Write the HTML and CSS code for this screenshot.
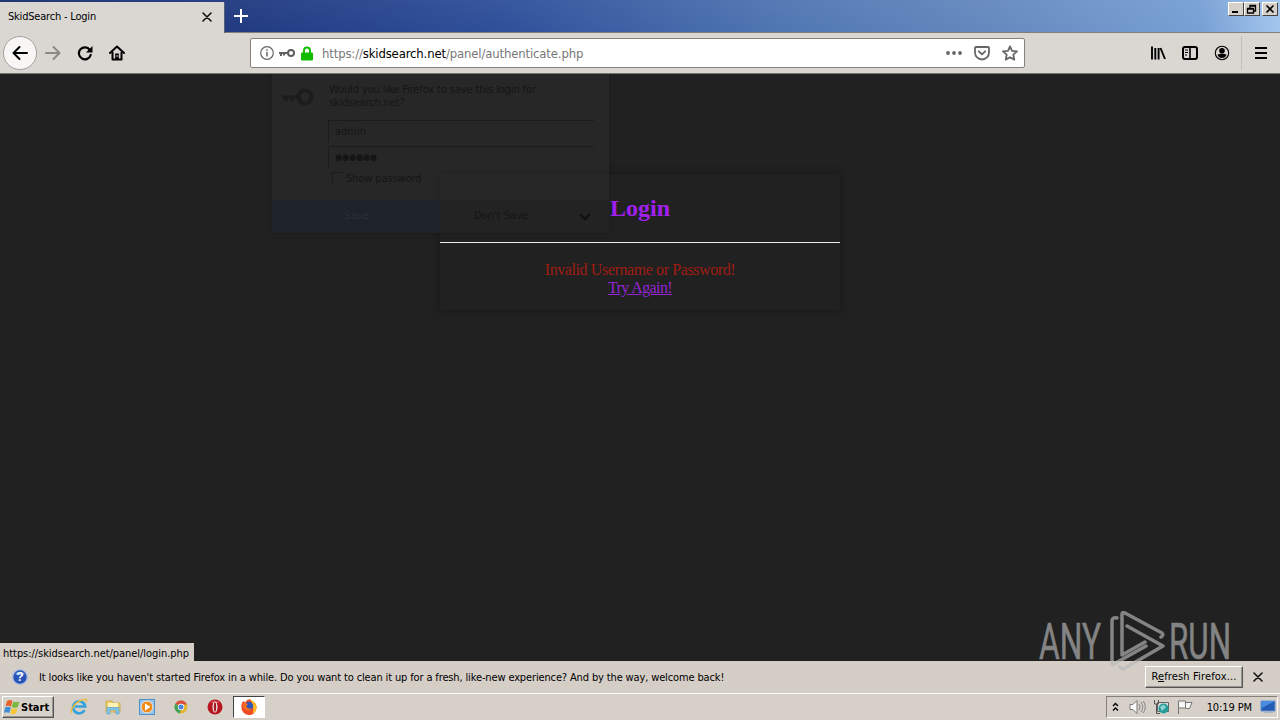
FILE: index.html
```html
<!DOCTYPE html>
<html lang="en">
<head>
<meta charset="utf-8">
<title>SkidSearch - Login</title>
<link rel="stylesheet" href="styles.css">
</head>
<body>
<div class="screen">
  <header class="tabs">
    <div class="tab"><span class="tab-title">SkidSearch - Login</span>
      <svg class="tab-close" width="10" height="10" viewBox="0 0 10 10"><path d="M1 1l8 8M9 1l-8 8" stroke="#111" stroke-width="1.600" stroke-linecap="round"/></svg>
    </div>
    <svg class="new-tab" width="14" height="14" viewBox="0 0 14 14"><path d="M7 0v14M0 7h14" stroke="#fff" stroke-width="2"/></svg>
    <div class="win-buttons">
      <span class="win"><svg width="14" height="13" viewBox="0 0 14 13"><path d="M3 9h6" stroke="#000" stroke-width="2"/></svg></span>
      <span class="win"><svg width="14" height="13" viewBox="0 0 14 13"><path d="M5 5V2.500h5.500V8H9M5 3h5.500M2.500 5.500h6v4.500h-6zM2.500 6h6" fill="none" stroke="#000" stroke-width="1.300"/></svg></span>
      <span class="win win-close"><svg width="14" height="13" viewBox="0 0 14 13"><path d="M3.500 2.500l7 7M10.500 2.500l-7 7" stroke="#000" stroke-width="1.600"/></svg></span>
    </div>
  </header>

  <nav class="toolbar">
    <div class="nav-left">
      <span class="back"><svg width="16" height="16" viewBox="0 0 16 16"><path d="M15 8H2M7.500 2L1.500 8l6 6" fill="none" stroke="#000" stroke-width="2" stroke-linecap="round" stroke-linejoin="round"/></svg></span>
      <svg width="16" height="16" viewBox="0 0 16 16"><path d="M1 8h13M8.500 2l6 6-6 6" fill="none" stroke="#8b8985" stroke-width="2" stroke-linecap="round" stroke-linejoin="round"/></svg>
      <svg width="16" height="16" viewBox="0 0 16 16"><path d="M12.800 4.800A6 6 0 1 0 13.700 10" fill="none" stroke="#000" stroke-width="2.200" stroke-linecap="round"/><path d="M15.500 1v6.500H9z"/></svg>
      <svg width="16" height="16" viewBox="0 0 16 16"><path d="M1 8l7-6.500L15 8" fill="none" stroke="#000" stroke-width="2" stroke-linecap="round" stroke-linejoin="round"/><path d="M3.500 7v7.500h9V7" fill="none" stroke="#000" stroke-width="2" stroke-linejoin="round"/><path d="M6.200 8.500h3.600V15H6.200z"/><path d="M7.600 10h1v2h-1z" fill="#ddd"/></svg>
    </div>
    <div class="urlbar">
      <svg width="14" height="14" viewBox="0 0 14 14"><circle cx="7" cy="7" r="6.300" fill="none" stroke="#666" stroke-width="1.200"/><path d="M7 6v4.500M7 3.300v1.500" stroke="#666" stroke-width="1.500"/></svg>
      <svg class="key" width="16" height="10" viewBox="0 0 16 10"><circle cx="12" cy="5" r="3" fill="none" stroke="#606060" stroke-width="2"/><path d="M9 5H0M2 5v3M5 5v2.500" fill="none" stroke="#606060" stroke-width="2"/></svg>
      <svg class="lock" width="12" height="15" viewBox="0 0 12 15"><path d="M3 8V4.500a3 3 0 0 1 6 0V8" fill="none" stroke="#12bc00" stroke-width="2"/><rect y="6.500" width="12" height="8" rx="1" fill="#12bc00"/></svg>
      <span class="url">https://<b>skidsearch.net</b>/panel/authenticate.php</span>
      <div class="url-actions">
        <svg width="16" height="16" viewBox="0 0 16 16" fill="#666"><circle cx="2" cy="8" r="1.900"/><circle cx="8" cy="8" r="1.900"/><circle cx="14" cy="8" r="1.900"/></svg>
        <svg width="16" height="16" viewBox="0 0 16 16" fill="none" stroke="#666" stroke-width="1.800" stroke-linecap="round" stroke-linejoin="round"><path d="M2 2h12q1 0 1 1v4.500a7 7 0 0 1-14 0V3q0-1 1-1z"/><path d="M4.800 6.300L8 9.300l3.200-3"/></svg>
        <svg width="16" height="16" viewBox="0 0 16 16"><path d="M8 1.300l2 4.500 5 .6-3.700 3.300 1 4.900L8 12.200l-4.300 2.400 1-4.900L1 6.400l5-.6z" fill="none" stroke="#666" stroke-width="1.800" stroke-linejoin="round"/></svg>
      </div>
    </div>
    <div class="nav-right">
      <svg width="16" height="16" viewBox="0 0 16 16"><path d="M2 1.500v13M5.300 3v11.500M8.600 3v11.500M10.500 3l4.500 11" stroke="#000" stroke-width="1.900"/></svg>
      <svg width="16" height="16" viewBox="0 0 16 16"><rect x="1" y="2" width="14" height="12" rx="2" fill="none" stroke="#000" stroke-width="2"/><path d="M8 2v12" stroke="#000" stroke-width="1.600"/><path d="M3 5h3M3 7.500h3M3 10h2" stroke="#000"/></svg>
      <svg width="16" height="16" viewBox="0 0 16 16"><circle cx="8" cy="8" r="6.700" fill="none" stroke="#000" stroke-width="1.100"/><circle cx="8" cy="5.800" r="2.800"/><path d="M3.500 9.500q4.500-1.500 9 0-1 3.500-4.500 3.500T3.500 9.500z"/></svg>
      <span class="menu"><svg width="12" height="12" viewBox="0 0 12 12"><path d="M0 1h12M0 6h12M0 11h12" stroke="#000" stroke-width="2"/></svg></span>
    </div>
  </nav>

  <main class="page">
    <section class="login">
      <h2>Login</h2>
      <div class="message"><span>Invalid Username or Password!</span><a href="#">Try Again!</a></div>
    </section>
    <section class="save-popup">
      <div class="save-body">
        <svg class="save-key" width="34" height="20" viewBox="0 0 34 20"><circle cx="24" cy="10" r="6.500" fill="none" stroke="#1c1c1c" stroke-width="4"/><path d="M18 10H1M5 10v4M11 10v4" stroke="#1c1c1c" stroke-width="3"/></svg>
        <div class="save-form">
          <p>Would you like Firefox to save this login for skidsearch.net?</p>
          <div class="field">admin</div>
          <div class="field dots">●●●●●●</div>
          <label><i class="box"></i>Show password</label>
        </div>
      </div>
      <div class="save-actions"><span class="save">Save</span><span class="dont">Don't Save</span>
        <span class="drop"><svg width="12" height="8" viewBox="0 0 12 8"><path d="M1 1l5 5 5-5" fill="none" stroke="#101010" stroke-width="2"/></svg></span></div>
    </section>
    <div class="status">https://skidsearch.net/panel/login.php</div>
  </main>

  <aside class="notice">
    <svg width="16" height="16" viewBox="0 0 16 16"><circle cx="8" cy="8" r="7.300" fill="#2855b5" stroke="#a9bcdf" stroke-width="1.300"/><path d="M3 5a6 5 0 0 1 10 0q-5 3-10 0z" fill="#6e98dd"/><text x="8" y="12.300" class="question">?</text></svg>
    <span class="notice-text">It looks like you haven't started Firefox in a while. Do you want to clean it up for a fresh, like-new experience? And by the way, welcome back!</span>
    <button class="refresh">R<u>e</u>fresh Firefox...</button>
    <svg class="notice-close" width="10" height="10" viewBox="0 0 10 10"><path d="M1 1l8 8M9 1L1 9" stroke="#111" stroke-width="1.600" stroke-linecap="round"/></svg>
  </aside>

  <footer class="taskbar">
    <button class="start"><svg width="16" height="16" viewBox="0 0 16 16"><path d="M3 2q3-2 5.500 0L7 7.500Q4.500 6 1.500 7.300z" fill="#e8622c"/><path d="M9.300 2.500q2.500 1.500 6 0L13.800 8q-3 1.500-6 0z" fill="#78b83c"/><path d="M1.300 8.300q3-1.300 5.500.2L5.300 14Q3 12.500 0 13.700z" fill="#3d8fd8"/><path d="M7.600 9q3 1.500 6 .2L12 14.500q-3 1.500-5.800 0z" fill="#f4c63a"/></svg><span>Start</span></button>
    <div class="launch">
      <svg width="18" height="18" viewBox="0 0 18 18"><path d="M14.500 12a6 6 0 1 1 .6-3.500H5" fill="none" stroke="#35a2dc" stroke-width="2.700"/><path d="M2 15C-1 13 5 4 12 2q6-2 4 2" fill="none" stroke="#edbc38" stroke-width="1.400"/></svg>
      <svg width="18" height="18" viewBox="0 0 18 18"><path d="M2 3h6l1 2h7v9H2z" fill="#edcd68" stroke="#d0ad50"/><path d="M4 5h10v4H4z" fill="#fff2b6"/><path d="M3 16V9.500h12V16h-3v-4H6v4z" fill="#84c4e8" stroke="#5da5d0" stroke-width=".7"/></svg>
      <svg width="18" height="18" viewBox="0 0 18 18"><rect x="1.500" y="1.500" width="15" height="15" fill="#9ac5e8" stroke="#4b91ce"/><circle cx="9" cy="9" r="5.900" fill="#f28b19" stroke="#e9e5dc"/><path d="M7 5.500l5.500 3.500L7 12.500z" fill="#fff"/></svg>
      <svg width="18" height="18" viewBox="0 0 18 18"><circle cx="9" cy="9" r="6.500" fill="#e5b52f"/><path d="M9 9L3.300 5.800A6.500 6.500 0 0 1 15 6.500H9z" fill="#d94f42"/><path d="M9 9L3.300 5.800A6.500 6.500 0 0 0 8 15.400z" fill="#41a25a"/><circle cx="9" cy="9" r="3.200" fill="#fff"/><circle cx="9" cy="9" r="2.500" fill="#4b87d8"/></svg>
      <svg width="18" height="18" viewBox="0 0 18 18"><circle cx="9" cy="9" r="7.500" fill="#b71520"/><path d="M4 5q5-5 10 0z" fill="#d95358"/><ellipse cx="9" cy="9" rx="2.500" ry="5.500" fill="#eee"/><ellipse cx="9" cy="9" rx="1.200" ry="4.800" fill="#a61920"/></svg>
      <span class="active-app"><svg width="18" height="18" viewBox="0 0 18 18"><path d="M3 3l2 1.500Q9-1 12 3q5 2 4.500 7A7.500 7.500 0 0 1 1.500 9Q1 6 3 3z" fill="#f04a25"/><path d="M10 1q7 4 6.500 9-.5 4-4 5.500Q15 9 10 1z" fill="#ffbd24"/><circle cx="9" cy="8" r="4.200" fill="#3158b8"/><path d="M3 5q3-1 5 1.500L6 8q2 4 6 2-2 4-6 2T3 5z" fill="#f66a1e"/></svg></span>
    </div>
    <div class="tray">
      <svg width="7" height="10" viewBox="0 0 7 10"><path d="M1 4l2.500-2.500L6 4M1 8.500L3.500 6 6 8.500" fill="none" stroke="#000" stroke-width="1.400"/></svg>
      <svg class="volume" width="17" height="16" viewBox="0 0 17 16"><path d="M1 5.500h3l4-4v13l-4-4H1z" fill="#fff" stroke="#777"/><path d="M10 5q2 3 0 6M12 3q3.500 5 0 10M14.300 2q4 6 0 12" fill="none" stroke="#888"/></svg>
      <svg class="network" width="17" height="16" viewBox="0 0 17 16"><path d="M4.500 3.500h11v9h-11z" fill="#ddd" stroke="#666"/><path d="M1.500 1v4h4V1M3.500 5v9.500H7" fill="none" stroke="#555"/><circle cx="10.500" cy="9.500" r="5" fill="#269d98"/><path d="M7 8q4-4 6 0l-4 4z" fill="#8dd2ce"/></svg>
      <svg class="flag" width="17" height="16" viewBox="0 0 17 16"><path d="M1.500 15V2h7v7h-7M8.500 3.500H15l-2.500 6h-4" fill="#f7f7f7" stroke="#777"/></svg>
      <span class="clock">10:19 PM</span>
      <svg class="desktop" width="16" height="14" viewBox="0 0 16 14"><path d="M1 1h14v10H1z" fill="#245bb5" stroke="#6794c9"/><path d="M1 1h14L2 8z" fill="#4a8ce0"/><path d="M4 12.500h9" stroke="#a9b5c4"/></svg>
    </div>
  </footer>

  <svg class="watermark" width="210" height="68" viewBox="0 0 210 68">
    <text x="3" y="54" textLength="62" lengthAdjust="spacingAndGlyphs">ANY</text>
    <text x="133" y="54" textLength="62" lengthAdjust="spacingAndGlyphs">RUN</text>
    <path d="M81 13q-5-1-5 3v44l34-19M86 50V9q0-2 3-1l37 20q2 2-1 4M91 21l36 20L89 63q-3 2-5-1M86 50l23-13"/>
  </svg>
</div>
</body>
</html>
```
FILE: styles.css
```css
* { box-sizing: border-box; }
body { margin: 0; }
svg { display: block; flex-shrink: 0; }
.screen { position: relative; display: flex; flex-direction: column; width: 1280px; height: 720px; overflow: hidden; font: 11px "DejaVu Sans Condensed", "DejaVu Sans", sans-serif; color: #000; white-space: nowrap; }

.tabs { display: flex; height: 33px; background: linear-gradient(rgba(255,255,255,.04), transparent), linear-gradient(90deg, #15306f 0, #213a80 225px, #2f509a 500px, #5076b2 780px, #668abf 1000px, #78a0d4 1200px, #a2c5ed 1280px); border-bottom: 1px solid #827f7b; }
.tab { display: flex; align-items: center; justify-content: space-between; width: 225px; height: 31px; margin-top: 2px; padding: 0 12px 2px 8px; background: #dad7d2; border-right: 1px solid #555f7c; }
.tab-title { letter-spacing: -.2px; }
.new-tab { margin: 9px 0 0 9px; }
.win-buttons { display: flex; margin: 2px 2px 0 auto; }
.win { width: 16px; height: 14px; background: #d5d0c8; border: 1px solid; border-color: #fff #444 #444 #fff; }
.win-close { margin-left: 2px; }

.toolbar { display: flex; align-items: center; height: 41px; padding: 0 13px 0 3px; background: #dad7d2; border-bottom: 1px solid #777571; }
.nav-left { display: flex; align-items: center; gap: 16px; width: 247px; }
.back { display: grid; place-items: center; width: 34px; height: 34px; margin-right: -8px; border: 1px solid #a3a19e; border-radius: 50%; background: #f8f7f6; }
.urlbar { display: flex; align-items: center; width: 775px; height: 30px; padding: 0 6px 0 9px; background: #fff; border: 1px solid #85827e; border-radius: 2px; }
.key { margin-left: 5px; }
.lock { margin-left: 6px; }
.url { margin-left: 9px; font-size: 13px; letter-spacing: -.15px; color: #777; }
.url b { font-weight: 400; color: #000; }
.url-actions { display: flex; gap: 12px; margin-left: auto; }
.nav-right { display: flex; align-items: center; gap: 16px; margin-left: auto; }
.menu { display: flex; align-items: center; height: 34px; margin-left: -5px; padding-left: 13px; border-left: 1px solid #c2bfba; }

.page { position: relative; flex: 1; background: #212121; }
.save-popup { position: absolute; left: 272px; top: 0; width: 337px; height: 159px; background: rgba(50,50,50,.4); color: #151515; box-shadow: 0 0 4px rgba(20,20,20,.5); clip-path: inset(0 -6px -6px -6px); }
.save-body { display: flex; height: 126px; padding: 9px 15px 0 9px; }
.save-key { margin-top: 4px; }
.save-form { width: 266px; margin-left: 13px; }
.save-form p { margin: 0 0 11px 1px; line-height: 13px; white-space: normal; width: 230px; letter-spacing: -.12px; }
.field { height: 22px; margin-bottom: 4px; padding: 4px 6px; border: solid #1c1c1c; border-width: 1px 0 0 1px; }
.dots { font-size: 9px; letter-spacing: -.1px; padding-top: 5px; }
.save-form label { display: flex; gap: 3px; margin: 3px 0 0 4px; line-height: 13px; letter-spacing: -.1px; }
.box { width: 11px; height: 11px; border: solid #1c1c1c; border-width: 1px 0 0 1px; }
.save-actions { display: flex; height: 33px; line-height: 32px; text-align: center; background: rgba(30,30,30,.35); }
.save { width: 169px; background: #1e232a; color: #2b2f34; }
.dont { width: 120px; }
.drop { display: grid; flex: 1; place-items: center; }

.login { position: absolute; left: 440px; top: 100px; width: 400px; height: 136px; text-align: center; background: #212121; box-shadow: 0 0 7px #171717; font-family: "Liberation Serif", serif; }
.login h2 { height: 69px; margin: 0; padding-top: 20px; border-bottom: 1px solid #eee; font-size: 24px; line-height: 28px; color: #a020f0; }
.message { display: flex; flex-direction: column; align-items: center; padding-top: 18px; font-size: 16px; line-height: 18px; letter-spacing: -.4px; color: #9f1d12; }
.message a { color: #9325d4; letter-spacing: -.6px; }
.status { position: absolute; left: 0; bottom: 0; width: 194px; height: 18px; padding: 4px 3px 0; background: #d5cfc8; letter-spacing: -.05px; line-height: 13px; }

.notice { display: flex; align-items: center; height: 32px; padding: 0 17px 0 12px; background: #d5cec7; }
.question { fill: #fff; font: bold 12px "Liberation Sans", sans-serif; text-anchor: middle; }
.notice-text { margin-left: 11px; letter-spacing: -.137px; }
button { font: inherit; color: #000; background: #d6d1c9; border: 1px solid; border-color: #fff #555 #555 #fff; box-shadow: inset -1px -1px #999690; }
.refresh { width: 98px; height: 22px; margin-left: auto; padding: 0 0 2px; letter-spacing: .15px; }
.notice-close { margin-left: 10px; }

.taskbar { display: flex; height: 27px; padding: 2px; background: #d6d0c9; border-top: 1px solid #fff; }
.start { display: flex; align-items: center; gap: 1px; width: 52px; height: 22px; padding: 0 1px; font-weight: 700; letter-spacing: 0; }
.launch { display: flex; align-items: center; gap: 16px; height: 22px; margin-left: 16px; }
.active-app { display: grid; place-items: center; width: 32px; height: 22px; margin-left: -7px; background: #fff; border: 1px solid; border-color: #444 #fff #fff #444; }
.tray { display: flex; align-items: center; width: 172px; height: 22px; margin-left: auto; padding: 0 1px 0 5px; border: 1px solid; border-color: #858079 #fff #fff #858079; }
.volume { margin-left: 10px; }
.network, .flag { margin-left: 7px; }
.clock { margin-left: auto; letter-spacing: -.1px; }
.desktop { margin-left: 8px; }

.watermark { position: absolute; left: 1036px; top: 605px; opacity: .65; fill: none; stroke: #b9b9b9; stroke-width: 3.5; stroke-linejoin: round; stroke-linecap: round; }
.watermark text { font: 50px Roboto, sans-serif; fill: #b9b9b9; stroke: #b9b9b9; stroke-width: .6; }
```
